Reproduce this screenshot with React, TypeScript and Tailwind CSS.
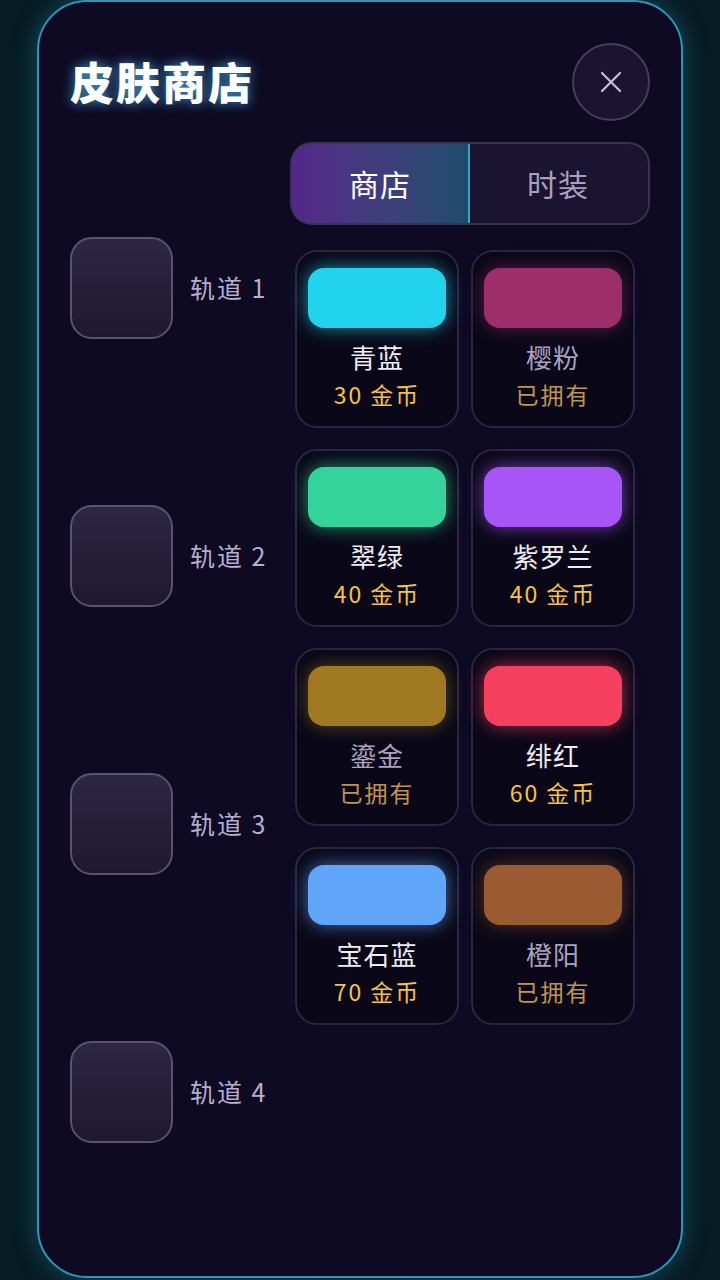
import { X } from 'lucide-react';

const skins = [
  { name: '青蓝', color: '#22d3ee', price: 30, owned: false },
  { name: '樱粉', color: '#9c2f6b', price: 0, owned: true },
  { name: '翠绿', color: '#34d399', price: 40, owned: false },
  { name: '紫罗兰', color: '#a855f7', price: 40, owned: false },
  { name: '鎏金', color: '#a07822', price: 0, owned: true },
  { name: '绯红', color: '#f43f5e', price: 60, owned: false },
  { name: '宝石蓝', color: '#60a5fa', price: 70, owned: false },
  { name: '橙阳', color: '#9a5a32', price: 0, owned: true },
];

const tracks = ['轨道 1', '轨道 2', '轨道 3', '轨道 4'];

export default function App() {
  return (
    <div
      className="w-[720px] h-[1280px] overflow-hidden bg-gradient-to-r from-[#071c24] via-[#08161e] to-[#071c24] px-[37px] pb-[2px]"
      style={{ fontFamily: '"Noto Sans CJK SC", "Noto Sans", sans-serif' }}
    >
      <div className="h-full rounded-[50px] border-2 border-[#2f94b8] bg-[#0e0a24] shadow-[0_0_24px_rgba(34,170,210,0.35)] pt-[41px] pl-[31px] pr-[31px]">
        {/* header */}
        <div className="flex items-center justify-between h-[78px]">
          <h1 className="text-[44px] font-black text-white tracking-[2px] leading-none mt-[-2px] [text-shadow:0_0_12px_rgba(80,200,255,0.75)]">
            皮肤商店
          </h1>
          <button className="w-[78px] h-[78px] rounded-full border-2 border-[#463d5e] bg-[#1a1430] flex items-center justify-center">
            <X className="w-[36px] h-[36px] text-[#c4bcd6]" strokeWidth={1.5} />
          </button>
        </div>

        {/* tabs */}
        <div className="flex justify-end mt-[21px]">
          <div className="w-[360px] h-[83px] flex rounded-[22px] border-2 border-[#3a3350] bg-[#1a1430] overflow-hidden">
            <div className="w-[180px] flex items-center justify-center rounded-l-[22px] border-2 border-[#3aa4cc] m-[-2px] bg-gradient-to-r from-[#55268a] to-[#1c4c6c] text-white text-[30px] tracking-[1px]">
              商店
            </div>
            <div className="flex-1 flex items-center justify-center text-[#a8a0c0] text-[30px] tracking-[1px]">
              时装
            </div>
          </div>
        </div>

        {/* body */}
        <div className="flex mt-[12px]">
          <div className="w-[225px] flex flex-col gap-[166px]">
            {tracks.map((t) => (
              <div key={t} className="flex items-center gap-[17px]">
                <div className="w-[103px] h-[102px] rounded-[22px] border-2 border-[#5a5272] bg-gradient-to-b from-[#2e2644] to-[#1e1830]" />
                <span className="text-[25px] text-[#b6aecc] tracking-[2px]">{t}</span>
              </div>
            ))}
          </div>

          <div className="grid grid-cols-2 gap-x-[12px] gap-y-[21px] w-[340px] mt-[13px] self-start">
            {skins.map((s) => (
              <div
                key={s.name}
                className="h-[178px] rounded-[22px] border-2 border-[#2a2540] bg-[#0a0818] flex flex-col items-center pt-[16px] px-[11px]"
              >
                <div
                  className="w-full h-[60px] rounded-[16px]"
                  style={{
                    backgroundColor: s.color,
                    boxShadow: `0 0 18px ${s.color}${s.owned ? '88' : 'aa'}`,
                  }}
                />
                <div
                  className={`mt-[11px] text-[26px] leading-[35px] tracking-[1px] ${
                    s.owned ? 'text-[#aaa2c0]' : 'text-[#f0ecf8]'
                  }`}
                >
                  {s.name}
                </div>
                <div
                  className={`mt-[4px] text-[23px] leading-[32px] tracking-[2px] ${
                    s.owned ? 'text-[#bf9650]' : 'text-[#f5c24a]'
                  }`}
                >
                  {s.owned ? '已拥有' : `${s.price} 金币`}
                </div>
              </div>
            ))}
          </div>
        </div>
      </div>
    </div>
  );
}
